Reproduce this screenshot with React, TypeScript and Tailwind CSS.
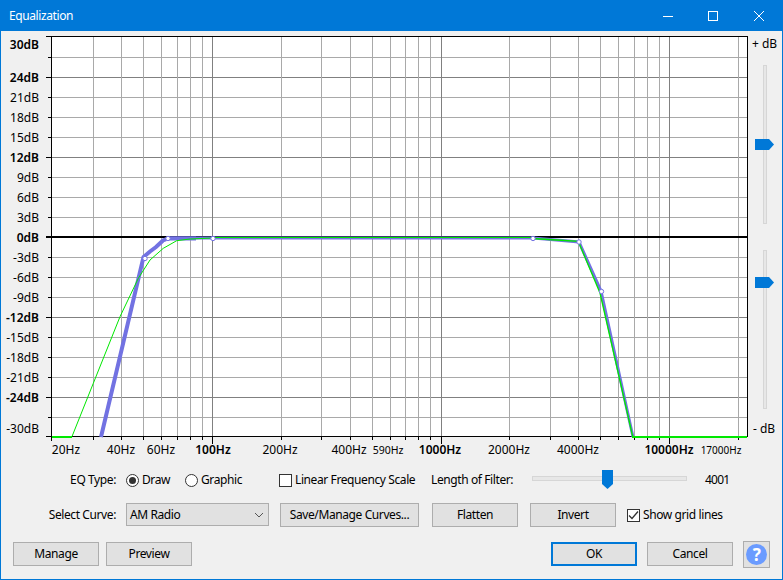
const FONT = "font-['Noto_Sans',sans-serif]";

const yOf = (db: number) => Math.round(237 - (db * 200) / 30) + 0.5;
const xOf = (hz: number) => Math.round(212 + 228.5 * (Math.log10(hz) - 2)) + 0.5;

const dbLabels: [number, string, boolean, number?][] = [
  [30, "30dB", true, 49],
  [24, "24dB", true],
  [21, "21dB", false],
  [18, "18dB", false],
  [15, "15dB", false],
  [12, "12dB", true],
  [9, "9dB", false],
  [6, "6dB", false],
  [3, "3dB", false],
  [0, "0dB", true],
  [-3, "-3dB", false],
  [-6, "-6dB", false],
  [-9, "-9dB", false],
  [-12, "-12dB", true],
  [-15, "-15dB", false],
  [-18, "-18dB", false],
  [-21, "-21dB", false],
  [-24, "-24dB", true],
  [-30, "-30dB", false, 433],
];

const hzLabels: [number, string, boolean, number][] = [
  [66, "20Hz", false, 12],
  [121, "40Hz", false, 12],
  [161, "60Hz", false, 12],
  [213, "100Hz", true, 12],
  [280, "200Hz", false, 12],
  [349, "400Hz", false, 12],
  [388, "590Hz", false, 10.5],
  [440, "1000Hz", true, 12],
  [509, "2000Hz", false, 12],
  [578, "4000Hz", false, 12],
  [669, "10000Hz", true, 12],
  [721, "17000Hz", false, 10],
];

const freqs = [
  30, 40, 50, 60, 70, 80, 90, 100, 200, 300, 400, 500, 600, 700, 800, 900, 1000, 2000, 3000, 4000,
  5000, 6000, 7000, 8000, 9000, 10000, 20000,
];
const majorFreqs = [100, 1000, 10000];
const dbs = [27, 24, 21, 18, 15, 12, 9, 6, 3, -3, -6, -9, -12, -15, -18, -21, -24, -27];
const majorDbs = [24, 12, -12, -24];
const points = [
  [145, 258.5],
  [168, 238.5],
  [213, 238.5],
  [533, 238.5],
  [579, 242],
  [601.5, 291.5],
];

function Chart() {
  return (
    <svg width="749" height="429" viewBox="1 31 749 429" className="block shrink-0 tracking-normal">
      <rect x="51" y="36" width="697" height="401" fill="#ffffff" />
      <g shapeRendering="crispEdges">
        {dbs.map((d) => (
          <g key={d}>
            <line x1="52" x2="747" y1={yOf(d)} y2={yOf(d)} stroke={majorDbs.includes(d) ? "#808080" : "#a9a9a9"} />
            <line
              x1={majorDbs.includes(d) ? 46 : 48}
              x2="51"
              y1={yOf(d)}
              y2={yOf(d)}
              stroke="#000000"
            />
          </g>
        ))}
        {freqs.map((f) => (
          <g key={f}>
            <line x1={xOf(f)} x2={xOf(f)} y1="37" y2="436" stroke={majorFreqs.includes(f) ? "#808080" : "#a9a9a9"} />
            <line x1={xOf(f)} x2={xOf(f)} y1="437" y2={majorFreqs.includes(f) ? 444 : 440} stroke="#000000" />
          </g>
        ))}
        <line x1="46" x2="748" y1="36.5" y2="36.5" stroke="#000000" />
        <line x1="46" x2="748" y1="436.5" y2="436.5" stroke="#000000" />
        <line x1="51.5" x2="51.5" y1="36" y2="441" stroke="#000000" />
        <line x1="747.5" x2="747.5" y1="36" y2="437" stroke="#000000" />
        <line x1="46" x2="747" y1="237" y2="237" stroke="#000000" strokeWidth="2" />
      </g>
      <polyline
        points="101,437 143.5,257 150,251.5 156,247 163,240.5 168,238.5 196,238.5"
        fill="none"
        stroke="#7272e2"
        strokeWidth="4"
      />
      <polyline points="168,238 533,238 579,242 601,291 633,437" fill="none" stroke="#7272e2" strokeWidth="3" />
      <polyline
        points="72,436.5 93.3,383.3 120,316.7 138.3,278.3 150,260 163.3,248.3 176.7,240.7 190,239 213,238"
        fill="none"
        stroke="#00e800"
        strokeWidth="1"
      />
      <polyline
        points="533,238.5 556.7,240 578.3,241.3 600,293 632.7,436.5"
        fill="none"
        stroke="#00e800"
        strokeWidth="1.3"
      />
      <g shapeRendering="crispEdges">
        <line x1="213" x2="533" y1="237.5" y2="237.5" stroke="#00e800" />
        <line x1="52" x2="72" y1="437" y2="437" stroke="#00e800" strokeWidth="2" />
        <line x1="632" x2="747" y1="437" y2="437" stroke="#00e800" strokeWidth="2" />
      </g>
      {points.map(([cx, cy]) => (
        <circle key={cx} cx={cx} cy={cy} r="2.2" fill="#ffffff" stroke="#7272e2" strokeWidth="1" />
      ))}
      {dbLabels.map(([d, label, bold, y]) => (
        <text
          key={label}
          x="39"
          y={y ?? yOf(d) + 4.5}
          textAnchor="end"
          fontSize="12"
          fontWeight={bold ? 600 : 400}
          fill="#000000"
        >
          {label}
        </text>
      ))}
      {hzLabels.map(([x, label, bold, size]) => (
        <text
          key={label}
          x={x}
          y="454"
          textAnchor="middle"
          fontSize={size}
          fontWeight={bold ? 600 : 400}
          fill="#000000"
        >
          {label}
        </text>
      ))}
    </svg>
  );
}

function VSlider({ height, thumb, className }: { height: number; thumb: number; className?: string }) {
  return (
    <div className={`relative w-[19px] ${className ?? ""}`} style={{ height }}>
      <div className="mx-auto h-full w-1 border border-[#d6d6d6] bg-[#e7e7e7]" />
      <svg width="19" height="11" viewBox="0 0 19 11" className="absolute left-0" style={{ top: thumb }}>
        <path d="M0 0H14L19 5.5L14 11H0Z" fill="#0078d7" />
      </svg>
    </div>
  );
}

function Btn({ label, className }: { label: string; className?: string }) {
  return (
    <button
      className={`flex items-center justify-center border border-[#adadad] bg-[#e1e1e1] text-black ${className ?? ""}`}
    >
      {label}
    </button>
  );
}

function Radio({ on }: { on?: boolean }) {
  return (
    <span className="flex h-[13px] w-[13px] items-center justify-center rounded-full border border-[#333333] bg-white">
      {on && <span className="h-[7px] w-[7px] rounded-full bg-[#333333]" />}
    </span>
  );
}

function Check({ on }: { on?: boolean }) {
  return (
    <span className="flex h-[13px] w-[13px] items-center justify-center border border-[#333333] bg-white">
      {on && (
        <svg width="11" height="11" viewBox="0 0 11 11">
          <path d="M1 5.5L4 8.5L10 1.5" fill="none" stroke="#333333" strokeWidth="1.3" />
        </svg>
      )}
    </span>
  );
}

export default function App() {
  return (
    <div
      className={`flex h-[580px] w-[783px] flex-col border-x border-b border-[#0078d7] bg-[#f0f0f0] text-xs tracking-[-0.4px] text-black ${FONT}`}
    >
      <div className="-mx-px flex h-[31px] shrink-0 items-center bg-[#0078d7] pl-[9px] text-white">
        <span>Equalization</span>
        <div className="ml-auto flex items-center">
          <svg width="10" height="10" viewBox="0 0 10 10" className="mr-[35px]">
            <path d="M0 5.5H10" stroke="#ffffff" />
          </svg>
          <svg width="10" height="10" viewBox="0 0 10 10" className="mr-[36px]">
            <rect x="0.5" y="0.5" width="9" height="9" fill="none" stroke="#ffffff" />
          </svg>
          <svg width="10" height="10" viewBox="0 0 10 10" className="mr-[19px]">
            <path d="M0 0L10 10M10 0L0 10" stroke="#ffffff" />
          </svg>
        </div>
      </div>

      <div className="flex h-[429px] shrink-0">
        <Chart />
        <div className="flex w-[32px] flex-col items-start pl-[5px]">
          <span className="-ml-[3px] mt-[5px] h-4 whitespace-nowrap leading-4 tracking-normal">+ dB</span>
          <VSlider height={159} thumb={74} className="mt-[13px]" />
          <VSlider height={159} thumb={27} className="mt-[26px]" />
          <span className="-ml-[2px] mt-3 h-4 whitespace-nowrap leading-4 tracking-normal">- dB</span>
        </div>
      </div>

      <div className="mt-[10px] flex h-5 shrink-0 items-center">
        <span className="w-[115px] text-right">EQ Type:</span>
        <span className="ml-[10px]">
          <Radio on />
        </span>
        <span className="ml-[3px] w-[43px]">Draw</span>
        <Radio />
        <span className="ml-[3px] w-[78px]">Graphic</span>
        <Check />
        <span className="ml-[3px] w-[136px] whitespace-nowrap">Linear Frequency Scale</span>
        <span className="w-[101px] whitespace-nowrap">Length of Filter:</span>
        <div className="relative h-5 w-[155px]">
          <div className="mt-[6px] h-[5px] border border-[#d6d6d6] bg-[#e7e7e7]" />
          <svg width="11" height="19" viewBox="0 0 11 19" className="absolute left-[70px] top-0">
            <path d="M0 0H11V14L5.5 19L0 14Z" fill="#0078d7" />
          </svg>
        </div>
        <span className="ml-[18px] tracking-[-0.8px]">4001</span>
      </div>

      <div className="mt-[13px] flex h-6 shrink-0 items-start">
        <span className="flex h-[23px] w-[115px] items-center justify-end">Select Curve:</span>
        <div className="ml-[10px] flex h-[23px] w-[143px] items-center justify-between border border-[#adadad] bg-[#e1e1e1] pl-[3px] pr-[4px]">
          <span>AM Radio</span>
          <svg width="10" height="6" viewBox="0 0 10 6">
            <path d="M1 1L5 5L9 1" fill="none" stroke="#555555" />
          </svg>
        </div>
        <Btn label="Save/Manage Curves..." className="ml-[11px] h-6 w-[139px]" />
        <Btn label="Flatten" className="ml-[13px] h-6 w-[86px]" />
        <Btn label="Invert" className="ml-3 h-6 w-[86px]" />
        <span className="ml-[11px] flex h-6 items-center gap-[3px] whitespace-nowrap">
          <Check on />
          Show grid lines
        </span>
      </div>

      <div className="mt-[14px] flex h-[27px] shrink-0 items-start pl-3">
        <Btn label="Manage" className="mt-px h-6 w-[86px]" />
        <Btn label="Preview" className="ml-[7px] mt-px h-6 w-[86px]" />
        <Btn label="OK" className="ml-auto mt-px h-6 w-[86px] !border-2 !border-[#0078d7]" />
        <Btn label="Cancel" className="ml-[10px] mt-px h-6 w-[86px]" />
        <div className="ml-[10px] mr-3 flex h-[27px] w-[27px] items-center justify-center border border-[#adadad] bg-[#e1e1e1]">
          <span className="flex h-[21px] w-[21px] items-center justify-center rounded-full bg-[#6a9bff] text-[17px] font-bold leading-none text-white">
            ?
          </span>
        </div>
      </div>
    </div>
  );
}
